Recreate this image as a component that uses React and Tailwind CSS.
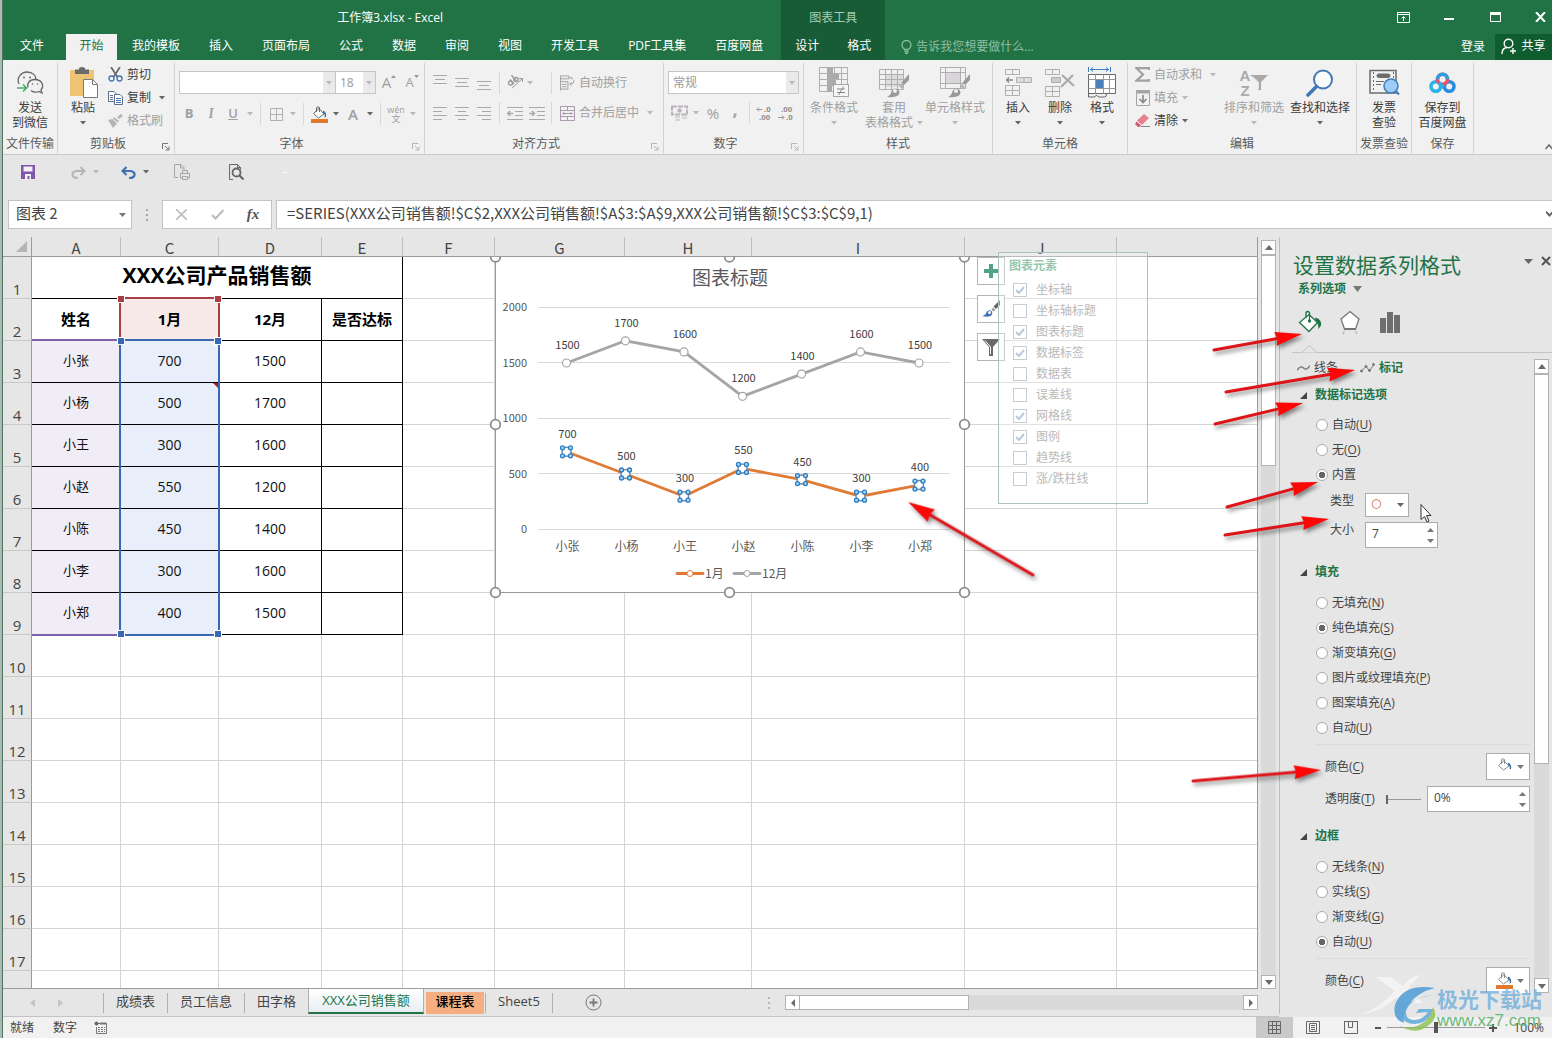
import React from "react";

const cx = (...parts) => parts.filter(Boolean).join(" ");

/* ---------- small shared pieces ---------- */

function Caret({ className = "text-[#666]" }) {
  return (
    <svg width="6" height="4" viewBox="0 0 6 4" className={cx("shrink-0", className)} aria-hidden="true">
      <path d="M0 0h6L3 3.5z" fill="currentColor" />
    </svg>
  );
}

function CaretButton({ label, dim, className = "w-3" }) {
  return (
    <button aria-label={label} className={cx("flex h-5 items-center justify-center", className)}>
      <Caret className={dim ? "text-[#b8b8b8]" : "text-[#666]"} />
    </button>
  );
}

function Sep({ className = "mx-1" }) {
  return <span className={cx("h-[22px] w-px shrink-0 bg-[#d8d8d8]", className)} />;
}

function Launcher({ dim }) {
  return (
    <svg width="8" height="8" viewBox="0 0 8 8" className={dim ? "text-[#b5b5b5]" : "text-[#777]"} aria-hidden="true">
      <path d="M.5 6V.5H6M3 3l3.5 3.5M7 3.5V7H3.5" fill="none" stroke="currentColor" />
    </svg>
  );
}

function Group({ name, width, children, launcher, dimLauncher }) {
  return (
    <section aria-label={name} className={cx("flex shrink-0 flex-col border-r border-[#d2d2d2]", width)}>
      <div className="h-[72px]">{children}</div>
      <div
        className={cx(
          "relative flex h-4 items-center justify-center pt-0.5 text-xs whitespace-nowrap text-[#5a5a5a]",
          launcher && "pr-4"
        )}
      >
        {name}
        {launcher && (
          <button aria-label={name + "设置"} className="absolute bottom-0 right-1">
            <Launcher dim={dimLauncher} />
          </button>
        )}
      </div>
    </section>
  );
}

function BigButton({ icon, lines, dim, caret, inlineCaret, width }) {
  return (
    <button className={cx("flex shrink-0 flex-col items-center pt-1", width, dim ? "text-[#a0a0a0]" : "text-[#3c3c3c]")}>
      <span className="flex h-[31px] items-center justify-center">{icon}</span>
      <span className="mt-0.5 flex flex-col items-center text-xs leading-[15px] whitespace-nowrap">
        {lines.map((l, i) => (
          <span key={l} className="flex items-center gap-1">
            {l}
            {inlineCaret && i === lines.length - 1 && <Caret className="text-[#b8b8b8]" />}
          </span>
        ))}
        {caret && (
          <span className="flex h-[15px] items-center">
            <Caret className={dim ? "text-[#b8b8b8]" : "text-[#666]"} />
          </span>
        )}
      </span>
    </button>
  );
}

function RibbonSelect({ label, value, className }) {
  return (
    <span className={cx("relative flex h-[23px]", className)}>
      <select aria-label={label} className="w-full appearance-none border border-[#c6c6c6] bg-white pl-1 text-xs text-[#9a9a9a]">
        <option>{value}</option>
      </select>
      <span className="pointer-events-none absolute inset-y-px right-px flex w-3 items-center justify-center bg-[#eaeaea]">
        <Caret className="text-[#b8b8b8]" />
      </span>
    </span>
  );
}

/* ---------- icons ---------- */

const WeChat = () => (
  <svg width="27" height="24" viewBox="0 0 27 24" fill="none" stroke="#666" strokeWidth="1.3">
    <path d="M2 13C-1 6 5 1 10 1c6 0 9 4 9 7M14 19.500c2 2 6 2 8 1l3 1.500-1-3c4-5 0-10.500-6-10.500s-8 4-7 8" />
    <circle cx="7" cy="6.500" r=".9" fill="#666" stroke="none" />
    <circle cx="13" cy="6.500" r=".9" fill="#666" stroke="none" />
    <circle cx="15.500" cy="13" r=".8" fill="#666" stroke="none" />
    <circle cx="20.500" cy="13" r=".8" fill="#666" stroke="none" />
    <path d="M0 17h9M6 13.500L9.500 17 6 20.500" stroke="#4bab6f" strokeWidth="1.600" />
  </svg>
);

const Paste = () => (
  <svg width="29" height="31" viewBox="0 0 29 31">
    <rect x="1" y="3" width="24" height="26" fill="#efc374" />
    <path d="M6 2.500h4V1q3-2 6 0v1.500h4V7H6z" fill="#6b6b6b" />
    <path d="M14.500 12.500h9l5 5v13h-14z" fill="#fff" stroke="#7a7a7a" />
    <path d="M23.500 12.500v5h5" fill="none" stroke="#7a7a7a" />
  </svg>
);

const Cut = () => (
  <svg width="15" height="15" viewBox="0 0 15 15" fill="none">
    <path d="M3 0l6.500 10M12 0L5.500 10" stroke="#666" strokeWidth="1.700" />
    <circle cx="3.500" cy="11.500" r="2.500" stroke="#3f73ae" strokeWidth="1.300" />
    <circle cx="11.500" cy="11.500" r="2.500" stroke="#3f73ae" strokeWidth="1.300" />
  </svg>
);

const Copy = () => (
  <svg width="15" height="14" viewBox="0 0 15 14" fill="#fff" stroke="#5c6f87">
    <path d="M.5.500H6l2 2v8H.5z" />
    <path d="M2 4.500h3M2 6.500h3M2 8.500h3" />
    <path d="M6.500 3.500H12l2.500 2.500v7.500h-8z" />
    <path d="M8 7.500h5M8 9.500h5M8 11.500h5" stroke="#3f73ae" />
  </svg>
);

const Painter = () => (
  <svg width="15" height="14" viewBox="0 0 15 14" fill="#b5b5b5">
    <path d="M9 3l4-3 2 2-4 3zM6 3l5 4-1.500 1.500L5 4.500zM0 6l4.500-1 4.500 4.500L5 14z" />
  </svg>
);

const BorderGrid = () => (
  <svg width="13" height="13" viewBox="0 0 13 13" fill="none" stroke="#b0b0b0">
    <path d="M.5.500h12v12H.5zM6.500 0v13M0 6.500h13" />
  </svg>
);

const Bucket = ({ bar = "#e07a2e", stroke = "#666" }) => (
  <svg width="17" height="17" viewBox="0 0 17 17" fill="none">
    <path d="M8 2.500L13 8l-5.500 4L2.500 7.500z" fill="#fff" stroke={stroke} />
    <path d="M5.500 6V1.500q1.500-1.500 3 0V6" stroke={stroke} />
    <path d="M12 4.500q4 1.500 3 6.500l-1.500.5Q14.500 8 12 7z" fill="#3f73ae" />
    {bar && <rect x="0" y="13" width="17" height="4" fill={bar} />}
  </svg>
);

const Lines = ({ rows, h = 15 }) => (
  <svg width="14" height={h} viewBox={`0 0 14 ${h}`} stroke="#a9a9a9">
    {rows.map(([y, x1, x2]) => (
      <path key={y} d={`M${x1} ${y}H${x2}`} />
    ))}
  </svg>
);

const Indent = ({ flip }) => (
  <svg width="16" height="13" viewBox="0 0 16 13" fill="none" stroke="#a9a9a9">
    <path d="M0 .5h16M8 4.500h8M8 8.500h8M0 12.500h16" />
    <path d={flip ? "M0 6.500h5M3 4l2.500 2.500L3 9" : "M1 6.500h5M3 4L.8 6.500 3 9"} strokeWidth="1.500" />
  </svg>
);

const Orient = () => (
  <svg width="17" height="15" viewBox="0 0 17 15" fill="none" stroke="#999">
    <path d="M5 13L15 4M12 3.500l3.500 0v3.500" />
    <circle cx="3.500" cy="8" r="2" strokeWidth="1.400" />
    <path d="M3 4.500L7 9" strokeWidth="1.400" />
    <circle cx="9" cy="4.500" r="2" strokeWidth="1.400" />
    <path d="M4.500 0L9 6" strokeWidth="1.400" />
  </svg>
);

const Wrap = () => (
  <svg width="16" height="16" viewBox="0 0 16 16" fill="none" stroke="#a0a0a0">
    <path d="M.5 0v16M.5.500h9v3h-9M.5 6.500h8v8h-8M2 9.500h5M2 12h5M9.500 2.500H13v2M14.500 5q1.500 4-4 4M12.500 7l-2 2 2 2" />
  </svg>
);

const Merge = () => (
  <svg width="15" height="15" viewBox="0 0 15 15" fill="none" stroke="#a99bad">
    <path d="M.5.500h14v14H.5zM.5 4.500h14M.5 10.500h14M7.500.500v4M7.500 10.500v4" />
    <path d="M2.500 7.500h10M4.500 6L3 7.500 4.500 9M10.500 6L12 7.500 10.500 9" />
  </svg>
);

const Money = () => (
  <svg width="17" height="16" viewBox="0 0 17 16" fill="none" stroke="#b9b3bb">
    <path d="M1 1.500h15v8H1z" strokeWidth="2" strokeDasharray="5 1" />
    <circle cx="8.500" cy="5.500" r="1.800" fill="#b9b3bb" />
    <path d="M4 12h5M4 15h5M11 10.500h5M11 13h5" strokeWidth="1.500" stroke="#ccc" />
  </svg>
);

const Brush = () => (
  <g>
    <path d="M30 7v6l-5 5-2.500-2.500z" fill="#999" />
    <path d="M22 17l3 3-2 2-3-3z" fill="#b5b5b5" />
    <path d="M8 30q4-2 4.500-6 3-4 6.500-1.500 3 3 0 6Q15 31 8 30z" fill="#999" />
    <circle cx="16" cy="24" r="2" fill="#f1f1f1" />
  </g>
);

const CondFormat = () => (
  <svg width="31" height="31" viewBox="0 0 31 31" fill="none" stroke="#b3acb5">
    <path d="M.5.500h28v24H.5zM.5 6.500h28M.5 12.500h28M.5 18.500h28M8.500.500v24M15.500.500v24M22.500.500v24" />
    <path d="M8 1h6v6H8zM8 7h12v5H8zM8 13h9v5H8zM8 19h5v5H8z" fill="#aaa" stroke="none" />
    <rect x="14.500" y="17.500" width="15" height="12" fill="#f6f6f6" stroke="#a5a5a5" />
    <path d="M18 22h8M18 25.500h8M24.500 19.500l-5 8.500" stroke="#888" />
  </svg>
);

const TableFormat = () => (
  <svg width="31" height="31" viewBox="0 0 31 31" fill="none" stroke="#b3acb5">
    <path d="M7 8h18v12H7z" fill="#ddd" stroke="none" />
    <path d="M.5 2.500h24v20H.5zM.5 7.500h24M.5 12.500h24M.5 17.500h24M6.500 2.500v20M12.500 2.500v20M18.500 2.500v20" />
    <g stroke="none"><Brush /></g>
  </svg>
);

const CellStyle = () => (
  <svg width="31" height="31" viewBox="0 0 31 31" fill="none" stroke="#b3acb5">
    <path d="M6 6h14v10H6z" fill="#d9d6da" stroke="none" />
    <path d="M.5.500h25v21H.5zM.5 5.500h25M.5 16.500h25M5.500.500v21M20.500.500v21" />
    <g stroke="none"><Brush /></g>
  </svg>
);

const InsertCells = () => (
  <svg width="27" height="28" viewBox="0 0 27 28" fill="none" stroke="#b0b0b0">
    <path d="M.5.500h14v5H.5zM7.500.500v5M.5 16.500h14v10H.5zM7.500 16.500v10M.5 21.500h14" />
    <path d="M11.500 8.500h15v5h-15zM19 8.500v5" fill="#ddd" />
    <path d="M1 11h7M4 8.500L1.500 11 4 13.500" stroke="#888" strokeWidth="1.300" />
  </svg>
);

const DeleteCells = () => (
  <svg width="30" height="28" viewBox="0 0 30 28" fill="none" stroke="#b0b0b0">
    <path d="M.5.500h14v5H.5zM7.500.500v5M.5 17.500h14v10H.5zM7.500 17.500v10M.5 22.500h14" />
    <path d="M6.500 8.500h9v5h-9z" fill="#ccc" />
    <path d="M17 6l12 11M28 6L16 18" stroke="#aaa" strokeWidth="2.200" />
  </svg>
);

const FormatCells = () => (
  <svg width="28" height="31" viewBox="0 0 28 31" fill="none" stroke="#666">
    <path d="M.5 0v5M22.500 0v5M2 2.500h19M5 .5L2.500 2.500 5 4.500M18 .5l2.500 2L18 4.500" stroke="#3a7dbd" />
    <path d="M.5 7.500h27v19H.5z" fill="#fff" />
    <path d="M.5 12.500h27M.5 21.500h27M7.500 7.500v19M15.500 7.500v19M21.500 7.500v19" stroke="#999" />
    <rect x="8" y="13" width="7" height="8" fill="#4a80ba" stroke="none" />
    <path d="M.5 26v4h5q2 0 3-2 1 2 3 2h5q2 0 2-3" />
  </svg>
);

const Sum = () => (
  <svg width="15" height="15" viewBox="0 0 15 15" fill="none" stroke="#a0a0a0" strokeWidth="2.200">
    <path d="M14 3V1.200H1.500L8 7.500l-6.500 6.200H14V12" />
  </svg>
);

const FillDown = () => (
  <svg width="14" height="16" viewBox="0 0 14 16" fill="none" stroke="#a5a5a5">
    <path d="M.5.500h13v15H.5z" />
    <path d="M0 2h14" strokeWidth="3" />
    <path d="M7 5v7M3.500 9L7 12.500 10.500 9" stroke="#888" strokeWidth="1.600" />
  </svg>
);

const Eraser = () => (
  <svg width="15" height="14" viewBox="0 0 15 14">
    <path d="M9 0l5 4-7 7-5-4.500z" fill="#e8818f" />
    <path d="M1.500 7.500L6 11.500 4.500 13H3L0 10z" fill="#cf5b6c" />
    <path d="M6 12.500h9" stroke="#888" />
  </svg>
);

const SortFilter = () => (
  <span className="flex items-center text-[#a9a9a9]">
    <span className="flex flex-col font-['Liberation_Sans',sans-serif] text-[15px] leading-[15px] font-bold">
      <span>A</span>
      <span>Z</span>
    </span>
    <svg width="18" height="16" viewBox="0 0 18 16" fill="#a9a9a9">
      <path d="M0 0h18l-7 7v8H8V7z" />
      <path d="M2.500 1.500L8.500 7v7" fill="none" stroke="#e6e6e6" />
    </svg>
  </span>
);

const Find = () => (
  <svg width="28" height="28" viewBox="0 0 28 28" fill="none" stroke="#4278b5">
    <circle cx="17" cy="10.500" r="9" fill="#fdfdfd" strokeWidth="2" />
    <path d="M10.500 17.500L2 26" strokeWidth="3.600" strokeLinecap="round" />
  </svg>
);

const Invoice = () => (
  <svg width="31" height="27" viewBox="0 0 31 27" fill="none" stroke="#6b6b6b">
    <path d="M1 1.500h26v22.500H1z" strokeWidth="1.500" />
    <path d="M4.500 3v20M24.500 3v9" strokeDasharray="2 2" />
    <rect x="8" y="5" width="13" height="3.500" rx="1.700" fill="#6b6b6b" />
    <path d="M7 12.500h8M7 15.500h5" />
    <circle cx="22" cy="17" r="7" fill="#9ecbf7" stroke="#3f7db8" strokeWidth="1.500" />
    <path d="M27 22l3 3.500" stroke="#3f7db8" strokeWidth="2" />
  </svg>
);

const Netdisk = () => (
  <svg width="27" height="23" viewBox="0 0 27 23" fill="none" strokeWidth="3.600">
    <circle cx="6.800" cy="15.500" r="4.800" stroke="#29b3e8" />
    <circle cx="20.200" cy="15.500" r="4.800" stroke="#2b8be2" />
    <circle cx="13.500" cy="8.200" r="5" stroke="#e9546b" />
    <path d="M8.500 8.200a5 5 0 0 1 10 0" stroke="#2d9fdc" />
    <path d="M10 12l4.500 4.500" stroke="#29b3e8" />
  </svg>
);

const DecBtn = ({ top, bottom, arrow }) => (
  <svg width="16" height="15" viewBox="0 0 16 15" fontFamily="Liberation Sans, sans-serif" fontSize="8" fill="#888" fontWeight="bold">
    <text x={arrow ? 8 : 3} y="6">{top}</text>
    <text x={arrow ? 3 : 8} y="14">{bottom}</text>
    <path d={arrow ? "M1 3.500h5M3 1.500l-2 2 2 2" : "M0 11.500h6M4 9.500l2 2-2 2"} fill="none" stroke="#999" />
  </svg>
);

/* ---------- header ---------- */

function Tab({ children }) {
  return <button className="h-full px-[14px] text-xs whitespace-nowrap text-white">{children}</button>;
}

function Header() {
  const tabs = ["我的模板", "插入", "页面布局", "公式", "数据", "审阅", "视图", "开发工具", "PDF工具集", "百度网盘"];
  return (
    <header className="flex h-[60px] shrink-0 bg-[#217346] text-xs text-white">
      <div className="flex shrink-0 flex-col">
        <h1 className="flex h-[35px] items-center justify-center">工作簿3.xlsx - Excel</h1>
        <nav className="-mt-px flex h-[26px] gap-px pb-0.5">
          <button className="mr-1 h-full w-[58px]">文件</button>
          <button className="-mb-0.5 w-[51px] bg-[#f1f1f1] pb-0.5 text-[#217346]">开始</button>
          {tabs.map((t) => (
            <Tab key={t}>{t}</Tab>
          ))}
        </nav>
      </div>
      <div className="ml-1 flex shrink-0 flex-col bg-[#185c37]">
        <div className="flex h-[35px] items-center justify-center text-[#a5cdb5]">图表工具</div>
        <div className="-mt-px flex h-[26px] pb-0.5">
          <Tab>设计</Tab>
          <Tab>格式</Tab>
        </div>
      </div>
      <div className="flex min-w-0 flex-1 flex-col">
        <div className="flex h-[34px] items-center justify-end">
          <button aria-label="功能区显示选项" className="flex w-[46px] justify-center">
            <svg width="13" height="11" viewBox="0 0 13 11" fill="none" stroke="#fff">
              <path d="M.5.500h12v10H.5zM.5 2.500h12M6.500 9V4.500M4.500 6.500l2-2 2 2" />
            </svg>
          </button>
          <button aria-label="最小化" className="flex w-[46px] justify-center">
            <svg width="10" height="8" viewBox="0 0 10 8"><path d="M0 6h10" stroke="#fff" strokeWidth="2" /></svg>
          </button>
          <button aria-label="最大化" className="flex w-[46px] justify-center">
            <svg width="11" height="10" viewBox="0 0 11 10"><path d="M.5.500h10v9H.5z" fill="none" stroke="#fff" /><path d="M0 1.500h11" stroke="#fff" strokeWidth="3" /></svg>
          </button>
          <button aria-label="关闭" className="flex w-[34px] justify-end pr-1.5">
            <svg width="11" height="10" viewBox="0 0 11 10"><path d="M1 0l9 10M10 0L1 10" stroke="#fff" strokeWidth="2" /></svg>
          </button>
        </div>
        <div className="flex h-[26px] items-center">
          <label className="ml-4 flex flex-1 items-center gap-1 text-[#8fbfa3]">
            <svg width="11" height="14" viewBox="0 0 11 14" fill="none" stroke="#8fbfa3" strokeWidth="1.300">
              <path d="M3.500 9.500Q1 7 1 5a4.500 4.500 0 0 1 9 0q0 2-2.500 4.500zM3.500 11.500h4M4 13.300h3" />
            </svg>
            <input aria-label="操作说明搜索" placeholder="告诉我您想要做什么..." className="w-40 bg-transparent text-xs text-white placeholder:text-[#8fbfa3]" />
          </label>
          <button className="px-2.5">登录</button>
          <button className="flex h-[26px] w-[57px] items-center justify-center gap-1 bg-[#0f5c2f] pb-0.5 whitespace-nowrap">
            <svg width="16" height="17" viewBox="0 0 16 17" fill="none" stroke="#fff" strokeWidth="1.400">
              <circle cx="7.500" cy="5.500" r="4.300" />
              <path d="M1 16q0-6 5-6.500M12 10v6M9 13h6" />
            </svg>
            共享
          </button>
        </div>
      </div>
    </header>
  );
}

/* ---------- ribbon ---------- */

function IconCell({ label, children, width = "w-[22px]" }) {
  return (
    <button aria-label={label} className={cx("flex h-5 shrink-0 items-center justify-center text-[#a0a0a0]", width)}>
      {children}
    </button>
  );
}

function SmallButton({ icon, children, dim, caret, gap = "ml-2" }) {
  return (
    <button className={cx("flex h-[23px] items-center whitespace-nowrap text-xs", dim ? "text-[#a0a0a0]" : "text-[#3c3c3c]")}>
      <span className="mr-1 flex w-[15px] justify-center">{icon}</span>
      {children}
      {caret && <Caret className={cx(gap, dim ? "text-[#b8b8b8]" : "text-[#666]")} />}
    </button>
  );
}

function Ribbon() {
  return (
    <div className="flex h-[95px] shrink-0 border-b border-[#c9c9c9] bg-[#f1f1f1] pt-[3px]">
      <Group name="文件传输" width="w-[55px]">
        <BigButton width="w-full" icon={<WeChat />} lines={["发送", "到微信"]} />
      </Group>

      <Group name="剪贴板" width="w-[117px]" launcher>
        <div className="flex">
          <BigButton width="w-[50px]" icon={<Paste />} lines={["粘贴"]} caret />
          <div>
            <SmallButton icon={<Cut />}>剪切</SmallButton>
            <SmallButton icon={<Copy />} caret>复制</SmallButton>
            <SmallButton icon={<Painter />} dim>格式刷</SmallButton>
          </div>
        </div>
      </Group>

      <Group name="字体" width="w-[250px]" launcher dimLauncher>
        <div className="flex flex-col gap-[9px] pt-2">
          <div className="flex items-center pl-1">
            <RibbonSelect label="字体" value="" className="w-[157px]" />
            <RibbonSelect label="字号" value="18" className="-ml-px w-[41px]" />
            <IconCell label="增大字号" width="w-[26px]">
              <span className="text-[15px]">A</span>
              <svg width="5" height="3" className="mb-3"><path d="M0 3L2.500 0 5 3z" fill="#999" /></svg>
            </IconCell>
            <IconCell label="减小字号" width="w-[20px]">
              <span className="text-[13px]">A</span>
              <svg width="5" height="3" className="mb-3"><path d="M0 0h5L2.500 3z" fill="#999" /></svg>
            </IconCell>
          </div>
          <div className="flex items-center pl-[3px] text-[13px]">
            <IconCell label="加粗"><b>B</b></IconCell>
            <IconCell label="倾斜"><i className="font-serif font-bold">I</i></IconCell>
            <IconCell label="下划线"><u className="font-semibold">U</u></IconCell>
            <CaretButton label="下划线选项" dim />
            <Sep />
            <IconCell label="边框"><BorderGrid /></IconCell>
            <CaretButton label="边框选项" dim />
            <Sep />
            <IconCell label="填充颜色"><Bucket /></IconCell>
            <CaretButton label="填充颜色选项" />
            <IconCell label="字体颜色"><span className="text-[15px] font-semibold">A</span></IconCell>
            <CaretButton label="字体颜色选项" />
            <Sep />
            <IconCell label="拼音">
              <span className="flex flex-col items-center text-[9px] leading-[9px]">
                <span>wén</span>
                <span>文</span>
              </span>
            </IconCell>
            <CaretButton label="拼音选项" dim />
          </div>
        </div>
      </Group>

      <Group name="对齐方式" width="w-[239px]" launcher dimLauncher>
        <div className="flex flex-col gap-[9px] pt-2 pl-1">
          <div className="flex h-[23px] items-center">
            <IconCell label="顶端对齐"><Lines rows={[[0.5, 0, 14], [4.5, 2, 12], [8.5, 0, 14]]} /></IconCell>
            <IconCell label="垂直居中"><Lines rows={[[3.5, 0, 14], [7.5, 2, 12], [11.5, 0, 14]]} /></IconCell>
            <IconCell label="底端对齐"><Lines rows={[[6.5, 0, 14], [10.5, 2, 12], [14.5, 0, 14]]} /></IconCell>
            <Sep />
            <IconCell label="方向"><Orient /></IconCell>
            <CaretButton label="方向选项" dim className="w-2" />
            <Sep className="ml-[17px] mr-[8px]" />
            <SmallButton icon={<Wrap />} dim>自动换行</SmallButton>
          </div>
          <div className="flex h-5 items-center">
            <IconCell label="左对齐"><Lines h={13} rows={[[0.5, 0, 14], [4.5, 0, 9], [8.5, 0, 14], [12.5, 0, 9]]} /></IconCell>
            <IconCell label="居中"><Lines h={13} rows={[[0.5, 0, 14], [4.5, 3, 11], [8.5, 0, 14], [12.5, 3, 11]]} /></IconCell>
            <IconCell label="右对齐"><Lines h={13} rows={[[0.5, 0, 14], [4.5, 5, 14], [8.5, 0, 14], [12.5, 5, 14]]} /></IconCell>
            <Sep />
            <IconCell label="减少缩进量"><Indent /></IconCell>
            <IconCell label="增加缩进量"><Indent flip /></IconCell>
            <Sep className="ml-[3px] mr-[8px]" />
            <SmallButton icon={<Merge />} dim caret>合并后居中</SmallButton>
          </div>
        </div>
      </Group>

      <Group name="数字" width="w-[140px]" launcher dimLauncher>
        <div className="flex flex-col gap-[9px] px-1 pt-2">
          <RibbonSelect label="数字格式" value="常规" className="w-full" />
          <div className="flex h-5 items-center">
            <IconCell label="会计数字格式"><Money /></IconCell>
            <CaretButton label="会计格式选项" dim />
            <IconCell label="百分比"><span className="text-[15px]">%</span></IconCell>
            <IconCell label="千位分隔"><b className="pb-2 text-lg">,</b></IconCell>
            <Sep className="mx-[3px]" />
            <IconCell label="增加小数位数"><DecBtn arrow top=".0" bottom=".00" /></IconCell>
            <IconCell label="减少小数位数"><DecBtn top=".00" bottom=".0" /></IconCell>
          </div>
        </div>
      </Group>

      <Group name="样式" width="w-[189px]">
        <div className="flex">
          <BigButton width="w-[60px]" dim icon={<CondFormat />} lines={["条件格式"]} caret />
          <BigButton width="w-[60px]" dim icon={<TableFormat />} lines={["套用", "表格格式"]} inlineCaret />
          <BigButton width="w-[62px]" dim icon={<CellStyle />} lines={["单元格样式"]} caret />
        </div>
      </Group>

      <Group name="单元格" width="w-[135px]">
        <div className="flex pl-1">
          <BigButton width="w-[42px]" icon={<InsertCells />} lines={["插入"]} caret />
          <BigButton width="w-[42px]" icon={<DeleteCells />} lines={["删除"]} caret />
          <BigButton width="w-[42px]" icon={<FormatCells />} lines={["格式"]} caret />
        </div>
      </Group>

      <Group name="编辑" width="w-[229px]">
        <div className="flex pl-[7px]">
          <div className="w-[86px]">
            <SmallButton icon={<Sum />} dim caret>自动求和</SmallButton>
            <SmallButton icon={<FillDown />} dim caret gap="ml-1">填充</SmallButton>
            <SmallButton icon={<Eraser />} caret gap="ml-1">清除</SmallButton>
          </div>
          <BigButton width="w-[66px]" dim icon={<SortFilter />} lines={["排序和筛选"]} caret />
          <BigButton width="w-[66px]" icon={<Find />} lines={["查找和选择"]} caret />
        </div>
      </Group>

      <Group name="发票查验" width="w-[55px]">
        <BigButton width="w-full" icon={<Invoice />} lines={["发票", "查验"]} />
      </Group>

      <Group name="保存" width="w-[62px]">
        <BigButton width="w-full" icon={<Netdisk />} lines={["保存到", "百度网盘"]} />
      </Group>

      <div className="flex flex-1 items-end justify-end pb-1">
        <button aria-label="折叠功能区">
          <svg width="7" height="6" viewBox="0 0 7 6"><path d="M.5 5L4 1l3.500 4" fill="none" stroke="#666" strokeWidth="1.500" /></svg>
        </button>
      </div>
    </div>
  );
}

/* ---------- quick access + formula bar ---------- */

function QuickAccess() {
  return (
    <div className="flex h-[45px] shrink-0 items-start pt-[7px] pl-[14px]">
      <IconCell label="保存">
        <svg width="14" height="14" viewBox="0 0 14 14">
          <path d="M0 0h14v14H0z" fill="#7e57a8" />
          <path d="M2.500 1.500h9v5h-9zM4 9h6v5H8.500v-3h-2v3H4z" fill="#f3eef8" />
        </svg>
      </IconCell>
      <IconCell label="恢复" width="ml-[28px] w-[22px]">
        <svg width="15" height="13" viewBox="0 0 15 13" fill="none" stroke="#b5b5b5" strokeWidth="2">
          <path d="M13 5H5Q1 6 1.500 9T7 12M9.500 1l4 4-4 4" />
        </svg>
      </IconCell>
      <CaretButton label="恢复选项" dim className="ml-px w-3" />
      <IconCell label="撤消" width="ml-[15px] w-[22px]">
        <svg width="15" height="13" viewBox="0 0 15 13" fill="none" stroke="#3f73ae" strokeWidth="2.200">
          <path d="M2 5h8q4 1 3.500 4T8 12M5.500 1l-4 4 4 4" />
        </svg>
      </IconCell>
      <CaretButton label="撤消选项" className="ml-px w-3" />
      <IconCell label="快速打印" width="ml-[19px] w-[22px]">
        <svg width="16" height="16" viewBox="0 0 16 16" fill="none" stroke="#a5a5a5">
          <path d="M4 13.500H.5V.500H7l3 3v3M6.500 .5v3.500h3M6.500 12V9.500h9V14h-2M8.500 9V6.500h5V9M8.500 12.500h5v3h-5zM6.500 12v2h2" />
        </svg>
      </IconCell>
      <IconCell label="打印预览" width="ml-[32px] w-[22px]">
        <svg width="15" height="16" viewBox="0 0 15 16" fill="none" stroke="#666">
          <path d="M4 15.500H.5V.500h8l3 3v2M8.500 .5v3h3" />
          <circle cx="7.500" cy="8.500" r="4" strokeWidth="1.800" />
          <path d="M10.500 11.500l4 4" strokeWidth="2.200" />
        </svg>
      </IconCell>
      <button aria-label="自定义快速访问工具栏" className="ml-9 flex h-5 w-2 items-center">
        <span className="h-px w-1 bg-white" />
      </button>
    </div>
  );
}

function FormulaBar() {
  return (
    <div className="flex shrink-0 pb-2 pl-[5px] font-['Noto_Sans_CJK_SC',sans-serif] text-[15px] text-[#444]">
      <span className="relative flex h-[29px] w-[124px]">
        <select aria-label="名称框" className="w-full appearance-none border border-[#c3c3c3] bg-white pb-0.5 pl-[7px] text-[15px]">
          <option>图表 2</option>
        </select>
        <span className="pointer-events-none absolute inset-y-0 right-1.5 flex items-center">
          <svg width="7" height="4" viewBox="0 0 7 4"><path d="M0 0h7L3.500 4z" fill="#777" /></svg>
        </span>
      </span>
      <span className="flex w-[30px] flex-col items-center justify-center gap-[3px]">
        <i className="size-0.5 bg-[#a8a8a8]" />
        <i className="size-0.5 bg-[#a8a8a8]" />
        <i className="size-0.5 bg-[#a8a8a8]" />
      </span>
      <div className="flex h-[29px] w-[110px] items-center border border-[#c3c3c3] bg-white">
        <button aria-label="取消" className="flex flex-1 justify-center">
          <svg width="11" height="11" viewBox="0 0 11 11"><path d="M0 0l11 11M11 0L0 11" stroke="#bdbdbd" strokeWidth="1.600" /></svg>
        </button>
        <button aria-label="输入" className="flex flex-1 justify-center">
          <svg width="13" height="11" viewBox="0 0 13 11"><path d="M1 6l3.500 3.500L12.500 1" fill="none" stroke="#bdbdbd" strokeWidth="2.200" /></svg>
        </button>
        <button className="flex-1 font-['Liberation_Serif',serif] text-[15px] font-bold text-[#555] italic">fx</button>
      </div>
      <div className="relative ml-1 flex h-[29px] flex-1">
        <input
          aria-label="编辑栏"
          defaultValue="=SERIES(XXX公司销售额!$C$2,XXX公司销售额!$A$3:$A$9,XXX公司销售额!$C$3:$C$9,1)"
          className="w-full border border-r-0 border-[#c3c3c3] bg-white pb-0.5 pl-2.5"
        />
        <svg width="6" height="6" viewBox="0 0 6 6" className="absolute top-[11px] right-0"><path d="M0 .8L3.500 4.500 7 .8" fill="none" stroke="#666" strokeWidth="2" /></svg>
      </div>
    </div>
  );
}

/* ---------- worksheet ---------- */

const people = [
  ["小张", 700, 1500],
  ["小杨", 500, 1700],
  ["小王", 300, 1600],
  ["小赵", 550, 1200],
  ["小陈", 450, 1400],
  ["小李", 300, 1600],
  ["小郑", 400, 1500],
];

const black = "border-r border-b border-black";

function RowHead({ n }) {
  return (
    <th scope="row" className="border-r border-b border-r-[#9b9b9b] border-b-[#c9c9c9] bg-[#e6e6e6] p-0 pb-px align-bottom text-[15px] leading-4 font-normal text-[#444]">
      {n}
    </th>
  );
}

function Blanks({ from }) {
  const count = 10 - from;
  return Array.from({ length: count }, (_, i) => (
    <td key={i} className={cx("border-b border-[#d4d4d4]", i < count - 1 && "border-r")} />
  ));
}

function SheetTable() {
  const cols = ["A", "C", "D", "E", "F", "G", "H", "I", "J", ""];
  return (
    <table className="w-full table-fixed border-separate border-spacing-0 bg-white text-center text-sm text-[#111]">
      <colgroup>
        <col className="w-[29px]" />
        <col className="w-[89px]" />
        <col className="w-[98px]" />
        <col className="w-[103px]" />
        <col className="w-[81px]" />
        <col className="w-[92px]" />
        <col className="w-[130px]" />
        <col className="w-[127px]" />
        <col className="w-[213px]" />
        <col className="w-[152px]" />
        <col />
      </colgroup>
      <thead>
        <tr className="h-5 bg-[#e6e6e6] font-['Noto_Sans_CJK_SC',sans-serif] text-[15px] leading-4 text-[#444]">
          <th className="border-r border-b border-[#9b9b9b] p-0 pr-1">
            <svg width="11" height="11" viewBox="0 0 11 11" className="ml-auto"><path d="M11 0v11H0z" fill="#b5b5b5" /></svg>
          </th>
          {cols.map((c, i) => (
            <th key={i} scope="col" className={cx("border-b border-b-[#9b9b9b] p-0 pt-[3px] font-normal", i < 9 && "border-r border-r-[#bdbdbd]")}>
              {c}
            </th>
          ))}
        </tr>
      </thead>
      <tbody>
        <tr className="h-[42px]">
          <RowHead n={1} />
          <td colSpan={4} className={cx(black, "p-0 pb-1.5 text-[21px] leading-6 font-bold text-black")}>XXX公司产品销售额</td>
          <Blanks from={4} />
        </tr>
        <tr className="h-[42px] text-[15px] font-bold text-black">
          <RowHead n={2} />
          <td className={cx(black, "p-0")}>姓名</td>
          <td className={cx(black, "bg-[#f8e9e9] p-0")}>1月</td>
          <td className={cx(black, "p-0")}>12月</td>
          <td className={cx(black, "p-0")}>是否达标</td>
          <Blanks from={4} />
        </tr>
        {people.map(([name, jan, dec], i) => (
          <tr key={name} className="h-[42px]">
            <RowHead n={i + 3} />
            <td className={cx(black, "bg-[#f1edf7] p-0 pb-0.5 text-[13px]")}>{name}</td>
            <td className={cx(black, "bg-[#e8effa] p-0 pb-0.5")}>{jan}</td>
            <td className={cx(black, "p-0 pb-0.5")}>{dec}</td>
            <td className={cx(black, "p-0")} />
            <Blanks from={4} />
          </tr>
        ))}
        {Array.from({ length: 9 }, (_, i) => (
          <tr key={i} className="h-[42px]">
            <RowHead n={i < 8 ? i + 10 : ""} />
            <Blanks from={0} />
          </tr>
        ))}
      </tbody>
    </table>
  );
}

function Chart() {
  const xs = [566.5, 625.5, 684, 742.5, 801.5, 860.5, 919];
  const y = (v) => 529.5 - v * 0.111;
  const line = (k) => people.map((p, i) => `${xs[i]},${y(p[k])}`).join(" ");
  const handles = [[495.5, 257], [729.5, 257], [964.5, 257], [495.5, 424.5], [964.5, 424.5], [495.5, 592.5], [729.5, 592.5], [964.5, 592.5]];
  return (
    <svg
      role="img"
      aria-label="图表标题"
      width="486"
      height="350"
      viewBox="487 250 486 350"
      className="absolute -top-[7px] left-[455px]"
      fontFamily="'Noto Sans CJK SC', sans-serif"
      fontSize="11"
      textAnchor="middle"
    >
      <rect x="495.500" y="250" width="469" height="342.500" fill="#fff" stroke="#9a9a9a" />
      <text x="730" y="285" fontSize="19" fill="#595959">图表标题</text>
      {[0, 500, 1000, 1500, 2000].map((v) => (
        <g key={v}>
          <path d={`M538 ${Math.round(y(v)) - 0.5}H950`} stroke="#d9d9d9" />
          <text x="527" y={y(v) + 3.5} textAnchor="end" fill="#595959">{v}</text>
        </g>
      ))}
      <polyline points={line(2)} fill="none" stroke="#a5a5a5" strokeWidth="2.800" />
      <polyline points={line(1)} fill="none" stroke="#e07b36" strokeWidth="2.800" />
      {people.map((p, i) => (
        <g key={p[0]}>
          <circle cx={xs[i]} cy={y(p[2])} r="4" fill="#fff" stroke="#a5a5a5" strokeWidth="1.200" />
          <circle cx={xs[i]} cy={y(p[1])} r="4.500" fill="#fff" stroke="#6f8ba5" strokeWidth="1.500" />
          {[[-4, -4], [4, -4], [-4, 4], [4, 4]].map(([dx, dy]) => (
            <circle key={dx + "," + dy} cx={xs[i] + dx} cy={y(p[1]) + dy} r="2" fill="#a9d8f2" stroke="#2c7cc4" strokeWidth="1.300" />
          ))}
          <text x={xs[i] + 1} y={y(p[2]) - 14} fill="#404040">{p[2]}</text>
          <text x={xs[i] + 1} y={y(p[1]) - 14} fill="#404040">{p[1]}</text>
          <text x={xs[i] + 1} y="551" fontSize="12" fill="#595959">{p[0]}</text>
        </g>
      ))}
      <path d="M677 573.500h26" stroke="#e07b36" strokeWidth="2.800" strokeLinecap="round" />
      <circle cx="690" cy="573.500" r="3" fill="#fff" stroke="#e07b36" />
      <text x="705" y="577.500" fontSize="12" textAnchor="start" fill="#595959">1月</text>
      <path d="M734 573.500h26" stroke="#a5a5a5" strokeWidth="2.800" strokeLinecap="round" />
      <circle cx="747" cy="573.500" r="3" fill="#fff" stroke="#a5a5a5" />
      <text x="762" y="577.500" fontSize="12" textAnchor="start" fill="#595959">12月</text>
      {handles.map(([hx, hy]) => (
        <circle key={hx + "-" + hy} cx={hx} cy={hy} r="4.800" fill="#fff" stroke="#8d8d8d" strokeWidth="1.800" />
      ))}
    </svg>
  );
}

function Handle({ className }) {
  return <i className={cx("absolute size-1.5 ring-1 ring-white", className)} />;
}

function RangeMarkers() {
  return (
    <>
      <div className="absolute top-[82px] -left-1 h-[297px] w-[93px] border-2 border-r-0 border-[#7d60a8]" />
      <div className="absolute top-[40px] left-[87px] h-11 w-[101px] border-2 border-[#a93f45]">
        <Handle className="-top-[3px] -left-[3px] bg-[#a93f45]" />
        <Handle className="-top-[3px] -right-[3px] bg-[#a93f45]" />
      </div>
      <svg width="5" height="5" className="absolute top-[126px] left-[181px]"><path d="M0 0h5v5z" fill="#a8202c" /></svg>
      <div className="absolute top-[82px] left-[87px] h-[297px] w-[101px] border-2 border-[#3a67b1]">
        <Handle className="-top-[3px] -left-[3px] bg-[#3a67b1]" />
        <Handle className="-top-[3px] -right-[3px] bg-[#3a67b1]" />
        <Handle className="-bottom-[3px] -left-[3px] bg-[#3a67b1]" />
        <Handle className="-right-[3px] -bottom-[3px] bg-[#3a67b1]" />
      </div>
    </>
  );
}

function ChartButtons() {
  const base = "flex size-[28px] items-center justify-center border border-[#b5b5b5] bg-white";
  return (
    <div className="absolute top-0 left-[945px] flex flex-col gap-2.5">
      <button aria-label="图表元素" className={base}>
        <svg width="14" height="14" viewBox="0 0 14 14"><path d="M5 0h4v5h5v4H9v5H5V9H0V5h5z" fill="#4fa583" /></svg>
      </button>
      <button aria-label="图表样式" className={base}>
        <svg width="18" height="18" viewBox="0 0 18 18">
          <path d="M18 0v5l-4 4-2.500-2.500z" fill="#666" />
          <path d="M11 7.500L13.500 10l-2 1.500-2-2z" fill="#999" />
          <path d="M0 16q4-1 4.500-4 2-3 5-1 2 3-1 5-3 1.500-8.500 0z" fill="#3f73ae" />
          <circle cx="7.500" cy="12.500" r="1.500" fill="#fff" />
        </svg>
      </button>
      <button aria-label="图表筛选器" className={base}>
        <svg width="18" height="17" viewBox="0 0 18 17">
          <path d="M0 0h18l-7 8v9H7V8z" fill="#6a6a6a" />
          <path d="M3 1.500L8.500 8v7" fill="none" stroke="#fff" />
        </svg>
      </button>
    </div>
  );
}

function ElementsPopup() {
  const items = [
    ["坐标轴", true],
    ["坐标轴标题", false],
    ["图表标题", true],
    ["数据标签", true],
    ["数据表", false],
    ["误差线", false],
    ["网格线", true],
    ["图例", true],
    ["趋势线", false],
    ["涨/跌柱线", false],
  ];
  return (
    <div className="absolute top-[15px] left-[995px] h-[252px] w-[150px] border border-[#a9c4be] bg-white/30 text-xs text-[#b9b9b9]">
      <h2 className="pl-2.5 leading-[26px] font-bold text-[#97c7ad]">图表元素</h2>
      <ul>
        {items.map(([name, on]) => (
          <li key={name}>
            <label className="flex h-[21px] items-center gap-[9px] pl-[14px]">
              <span className="relative flex">
                <input type="checkbox" defaultChecked={on} className="peer size-[14px] appearance-none border border-[#c5ced4]" />
                <svg width="10" height="8" viewBox="0 0 10 8" className="absolute top-[3px] left-0.5 hidden peer-checked:block">
                  <path d="M1 4l3 3 5-6" fill="none" stroke="#b7c9dd" strokeWidth="2" />
                </svg>
              </span>
              {name}
            </label>
          </li>
        ))}
      </ul>
    </div>
  );
}

function ArrowBtn({ dir, className = "size-[15px]" }) {
  const d = { up: "M0 5h8L4 0z", down: "M0 1h8L4 6z", left: "M5 0v8L1 4z", right: "M1 0v8l4-4z" }[dir];
  const names = { up: "向上", down: "向下", left: "向左", right: "向右" };
  return (
    <button aria-label={names[dir] + "滚动"} className={cx("flex shrink-0 items-center justify-center border border-[#b3b3b3] bg-white", className)}>
      <svg width={dir === "up" || dir === "down" ? 8 : 6} height={dir === "up" || dir === "down" ? 6 : 8}>
        <path d={d} fill="#6a6a6a" />
      </svg>
    </button>
  );
}

function SheetTabs() {
  const sep = "h-5 w-px shrink-0 bg-[#b0b0b0]";
  const tab = "h-full shrink-0 px-3 pb-0.5 whitespace-nowrap";
  return (
    <div className="flex h-[28px] shrink-0 items-center border-b border-[#c3c3c3] pr-[21px] text-[13px] text-[#444]">
      <div className="flex w-[100px] gap-[21px] pl-[26px]">
        <svg width="7" height="8"><path d="M6 0v8L1 4z" fill="#c3c3c3" /></svg>
        <svg width="7" height="8"><path d="M1 0v8l5-4z" fill="#c3c3c3" /></svg>
      </div>
      <span className={sep} />
      <button className={tab}>成绩表</button>
      <span className={sep} />
      <button className={tab}>员工信息</button>
      <span className={sep} />
      <button className={tab}>田字格</button>
      <button className="h-[25px] w-[116px] shrink-0 self-start border-r border-b-2 border-l border-r-[#b0b0b0] border-b-[#217346] border-l-[#b0b0b0] bg-gradient-to-b from-white to-[#e7eef3] text-[#217346]">
        XXX公司销售额
      </button>
      <button className="mr-px ml-0.5 h-[22px] w-[58px] shrink-0 bg-[#f4ae81] pb-0.5 font-medium text-black">课程表</button>
      <span className={sep} />
      <button className={tab}>Sheet5</button>
      <span className={sep} />
      <button aria-label="新工作表" className="ml-8">
        <svg width="17" height="17" viewBox="0 0 17 17" fill="none" stroke="#777">
          <circle cx="8.500" cy="8.500" r="7.500" />
          <path d="M8.500 4.500v8M4.500 8.500h8" strokeWidth="1.800" />
        </svg>
      </button>
      <div className="min-w-0 flex-1" />
      <span className="mr-[15px] flex flex-col gap-[3px]">
        <i className="size-0.5 bg-[#b5b5b5]" />
        <i className="size-0.5 bg-[#b5b5b5]" />
        <i className="size-0.5 bg-[#b5b5b5]" />
      </span>
      <div className="flex w-[473px] bg-[#dadada]">
        <ArrowBtn dir="left" />
        <div className="-ml-px h-[15px] w-[170px] border border-[#b3b3b3] bg-white" />
        <span className="flex-1" />
        <ArrowBtn dir="right" />
      </div>
    </div>
  );
}

function Worksheet() {
  return (
    <main className="flex min-w-0 flex-1 flex-col">
      <div className="flex min-h-0 flex-1">
        <div className="relative min-w-0 flex-1">
          <div className="h-full overflow-hidden border-r border-b border-[#9b9b9b]">
            <SheetTable />
          </div>
          <div className="absolute top-5 right-0 bottom-0 left-[29px] overflow-hidden">
            <RangeMarkers />
            <Chart />
            <ChartButtons />
          </div>
          <ElementsPopup />
        </div>
        <div className="ml-[3px] flex w-[18px] flex-col pt-[3px]">
          <div className="flex w-[15px] flex-1 flex-col bg-[#dadada]">
            <ArrowBtn dir="up" />
            <div className="h-[211px] border border-[#b3b3b3] bg-white" />
            <span className="flex-1" />
            <ArrowBtn dir="down" className="h-[14px] w-[15px]" />
          </div>
        </div>
      </div>
      <SheetTabs />
    </main>
  );
}

/* ---------- format pane ---------- */

function Key({ k }) {
  return k ? (
    <>
      (<u className="underline-offset-2">{k}</u>)
    </>
  ) : null;
}

function Radio({ name, text, k, on }) {
  return (
    <label className="flex h-[25px] items-center gap-1 pl-9">
      <input
        type="radio"
        name={name}
        defaultChecked={on}
        className="size-3 appearance-none rounded-full border border-[#ababab] bg-white checked:bg-[radial-gradient(circle,#666_0_3px,#fff_3.5px)]"
      />
      <span>
        {text}
        <Key k={k} />
      </span>
    </label>
  );
}

function Heading({ children, className }) {
  return (
    <h3 className={cx("flex h-6 items-center gap-[7px] pl-5 font-bold text-[#217346]", className)}>
      <svg width="8" height="7" className="shrink-0"><path d="M7 0v7H0z" fill="#444" /></svg>
      {children}
    </h3>
  );
}

function Spinner({ label, value, className }) {
  return (
    <span className={cx("relative flex h-[26px]", className)}>
      <input aria-label={label} defaultValue={value} className="w-full border border-[#ababab] bg-white px-1.5 pb-0.5 text-xs text-[#444]" />
      <span className="absolute inset-y-0 right-1 flex flex-col items-center justify-center gap-[7px]">
        <svg width="7" height="4"><path d="M0 4h7L3.500 0z" fill="#777" /></svg>
        <svg width="7" height="4"><path d="M0 0h7L3.500 4z" fill="#777" /></svg>
      </span>
    </span>
  );
}

function ColorRow({ bar, className }) {
  return (
    <div className={cx("flex items-center justify-between pl-[45px]", className)}>
      <span>
        颜色
        <Key k="C" />
      </span>
      <button aria-label="颜色" className="flex h-[27px] w-[44px] items-center justify-center gap-1 border border-[#ababab] bg-white pl-1">
        <Bucket bar={bar} stroke="#8a8a8a" />
        <svg width="7" height="4"><path d="M0 0h7L3.500 4z" fill="#777" /></svg>
      </button>
    </div>
  );
}

function Pane() {
  return (
    <aside className="mb-[3px] flex w-[273px] shrink-0 flex-col border-l border-[#bdbdbd] text-xs text-[#444]">
      <div className="flex items-center pt-3 pl-[13px]">
        <h2 className="flex-1 text-[21px] leading-8 whitespace-nowrap text-[#217346]">设置数据系列格式</h2>
        <button aria-label="任务窗格选项" className="mr-2 pb-2">
          <svg width="9" height="5"><path d="M0 0h9L4.500 5z" fill="#666" /></svg>
        </button>
        <button aria-label="关闭窗格" className="mr-px pb-2">
          <svg width="10" height="10"><path d="M1 1l8 8M9 1L1 9" stroke="#555" strokeWidth="2" /></svg>
        </button>
      </div>
      <button className="flex h-4 items-center gap-[7px] self-start pl-[18px] font-bold text-[#217346]">
        系列选项
        <svg width="9" height="6"><path d="M0 0h9L4.500 6z" fill="#777" /></svg>
      </button>
      <div className="flex h-[50px] items-center gap-4 pl-[18px]">
        <button aria-label="填充与线条" className="w-6">
          <svg width="24" height="24" viewBox="0 0 24 24" fill="none" stroke="#217346" strokeWidth="1.300">
            <path d="M11 4.500l8.500 8L11 21.500l-9.500-9z" fill="#fff" />
            <path d="M8 8V2.500q1.500-2 3.500 0V11" />
            <circle cx="11.500" cy="11" r="1" fill="#217346" />
            <path d="M17 7.500q7 1.500 6 8l-2.500 3.500q0-6-3-8z" fill="#217346" stroke="none" />
          </svg>
        </button>
        <button aria-label="效果" className="w-6">
          <svg width="24" height="26" viewBox="0 0 24 26" fill="none" stroke="#777" strokeWidth="1.300">
            <path d="M12 2.500l9 7.500-3.500 10h-11L3 10z" fill="#fff" />
            <path d="M6.500 20h11" strokeWidth="2" />
            <path d="M6.500 21.500L5 25M17.500 21.500L19 25" stroke="#bbb" />
          </svg>
        </button>
        <button aria-label="系列选项" className="w-6">
          <svg width="24" height="22" viewBox="0 0 24 22" fill="#6e6e6e">
            <path d="M2 7h6v15H2zM9 1h6v21H9zM16 4h6v18h-6z" />
          </svg>
        </button>
      </div>
      <div className="ml-3 h-1.5 border-b border-[#c3c3c3]">
        <svg width="16" height="8" viewBox="0 0 16 8" className="-mt-0.5 ml-2.5"><path d="M0 7.500L7.500.500 15 7.500" fill="#e6e6e6" stroke="#c3c3c3" /></svg>
      </div>
      <div className="flex h-[640px] min-h-0 overflow-hidden">
        <div className="min-w-0 flex-1">
          <div className="flex h-[30px] items-center pl-[17px]">
            <button className="flex items-center gap-1">
              <svg width="13" height="8" fill="none" stroke="#777" strokeWidth="1.300"><path d="M0 6.500Q3.500 1 6.500 4T13 1.500" /></svg>
              线条
            </button>
            <button className="ml-[22px] flex items-center gap-1 font-bold text-[#217346]">
              <svg width="15" height="10" fill="#777" stroke="#777">
                <path d="M1.500 8L6 3.500l3.500 4L14 1.500" fill="none" />
                <circle cx="1.500" cy="8" r="1" /><circle cx="6" cy="3.500" r="1" /><circle cx="9.500" cy="7.500" r="1" /><circle cx="13.500" cy="1.500" r="1" />
              </svg>
              标记
            </button>
          </div>
          <Heading>数据标记选项</Heading>
          <div className="pt-[5px]">
            <Radio name="marker" text="自动" k="U" />
            <Radio name="marker" text="无" k="O" />
            <Radio name="marker" text="内置" on />
          </div>
          <div className="mt-1.5 flex pl-[50px]">
            <span className="w-[35px] leading-4">类型</span>
            <span className="relative flex h-6 w-[44px]">
              <select aria-label="类型" className="w-full appearance-none border border-[#ababab] bg-white pb-1 pl-[5px] font-['DejaVu_Sans',sans-serif] text-xs font-bold text-[#c9601a]">
                <option>○</option>
              </select>
              <svg width="7" height="4" className="pointer-events-none absolute top-2.5 right-[5px]"><path d="M0 0h7L3.500 4z" fill="#666" /></svg>
            </span>
          </div>
          <div className="mt-[5px] flex pl-[50px]">
            <span className="w-[35px] leading-4">大小</span>
            <Spinner label="大小" value="7" className="w-[73px]" />
          </div>
          <Heading className="mt-3">填充</Heading>
          <div className="pt-1.5">
            <Radio name="fill" text="无填充" k="N" />
            <Radio name="fill" text="纯色填充" k="S" on />
            <Radio name="fill" text="渐变填充" k="G" />
            <Radio name="fill" text="图片或纹理填充" k="P" />
            <Radio name="fill" text="图案填充" k="A" />
            <Radio name="fill" text="自动" k="U" />
          </div>
          <div className="mt-1 ml-9 border-t border-[#dadada]" />
          <ColorRow className="mt-2" bar={null} />
          <div className="mt-1.5 flex items-center pl-[45px]">
            <label htmlFor="alpha" className="w-[61px]">
              透明度
              <Key k="T" />
            </label>
            <input
              id="alpha"
              type="range"
              defaultValue="0"
              className="h-3 w-[35px] appearance-none bg-[linear-gradient(#999,#999)] bg-[length:100%_1px] bg-center bg-no-repeat [&::-webkit-slider-thumb]:h-[9px] [&::-webkit-slider-thumb]:w-0.5 [&::-webkit-slider-thumb]:appearance-none [&::-webkit-slider-thumb]:bg-[#666]"
            />
            <span className="flex-1" />
            <Spinner label="透明度" value="0%" className="w-[103px]" />
          </div>
          <Heading className="mt-3">边框</Heading>
          <div className="pt-1.5">
            <Radio name="border" text="无线条" k="N" />
            <Radio name="border" text="实线" k="S" />
            <Radio name="border" text="渐变线" k="G" />
            <Radio name="border" text="自动" k="U" on />
          </div>
          <div className="mt-1 ml-9 border-t border-[#dadada]" />
          <ColorRow className="mt-2" bar="#e07a2e" />
        </div>
        <div className="mt-1.5 mr-[3px] ml-1 flex w-[15px] flex-col bg-[#dadada]">
          <ArrowBtn dir="up" />
          <div className="h-[390px] border border-[#b3b3b3] bg-white" />
          <span className="flex-1" />
          <ArrowBtn dir="down" />
        </div>
      </div>
    </aside>
  );
}

/* ---------- status bar ---------- */

function StatusBar() {
  return (
    <footer className="flex h-[21px] shrink-0 items-center bg-[#f1f1f1] text-xs text-[#444]">
      <span className="ml-[7px]">就绪</span>
      <span className="ml-[19px]">数字</span>
      <button aria-label="录制宏" className="ml-[17px]">
        <svg width="13" height="13" viewBox="0 0 13 13" fill="none" stroke="#777">
          <path d="M4 2.500h8.500v10H2.500V6" />
          <path d="M6 2.500h6.500" strokeWidth="2" />
          <path d="M4 6.500h7M4 8.500h7M4 10.500h7" strokeDasharray="2 1" />
          <circle cx="2.500" cy="2.500" r="2" fill="#666" stroke="none" />
        </svg>
      </button>
      <div className="flex-1" />
      <button aria-label="普通" className="flex h-full w-[37px] items-center justify-center bg-[#c9c9c9]">
        <svg width="13" height="13" fill="none" stroke="#666"><path d="M.5.500h12v12H.5zM.5 4.500h12M.5 8.500h12M4.500.500v12M8.500.500v12" /></svg>
      </button>
      <button aria-label="页面布局视图" className="flex w-[39px] justify-center">
        <svg width="14" height="13" fill="none" stroke="#666"><path d="M.5.500h13v12H.5zM3.500 2.500h7v8h-7zM5 4.500h4M5 6.500h4M5 8.500h4" /></svg>
      </button>
      <button aria-label="分页预览" className="flex w-[38px] justify-center">
        <svg width="14" height="13" fill="none" stroke="#666"><path d="M.5 0v12.500h13V0M.5.500h8v6h-4M4.500.500v6M8.500.500h5" /></svg>
      </button>
      <button aria-label="缩小" className="ml-[5px] flex w-3 justify-start">
        <svg width="6" height="2"><path d="M0 1h6" stroke="#555" strokeWidth="2" /></svg>
      </button>
      <input
        type="range"
        aria-label="缩放"
        defaultValue="50"
        className="h-3 w-[98px] appearance-none bg-[linear-gradient(#999,#999)] bg-[length:100%_1px] bg-center bg-no-repeat [&::-webkit-slider-thumb]:h-[11px] [&::-webkit-slider-thumb]:w-1 [&::-webkit-slider-thumb]:appearance-none [&::-webkit-slider-thumb]:bg-[#555]"
      />
      <button aria-label="放大" className="ml-1">
        <svg width="8" height="8"><path d="M4 0v8M0 4h8" stroke="#555" strokeWidth="2" /></svg>
      </button>
      <span className="mr-2 ml-4">100%</span>
    </footer>
  );
}

/* ---------- annotations drawn over the window ---------- */

const arrows = [
  [1214, 350, 1302, 334],
  [1226, 392, 1355, 370],
  [1215, 424, 1303, 403],
  [1227, 507, 1318, 482],
  [1225, 535, 1329, 519],
  [1193, 781, 1321, 770],
  [1033, 575, 908, 502],
];

function Annotations() {
  return (
    <svg width="1552" height="1038" className="absolute top-0 left-0" aria-hidden="true">
      <g style={{ filter: "drop-shadow(2px 3px 2px rgba(0,0,0,.45))" }}>
        {arrows.map(([x1, y1, x2, y2]) => {
          const len = Math.hypot(x2 - x1, y2 - y1);
          const deg = (Math.atan2(y2 - y1, x2 - x1) * 180) / Math.PI;
          return (
            <g key={x1 + "-" + y1} transform={`translate(${x1} ${y1}) rotate(${deg})`}>
              <path d={`M0 0H${len - 22}`} stroke="#dd1418" strokeWidth="3" strokeLinecap="round" />
              <path d={`M${len} 0l-27 -7l2 7l-2 7z`} fill="#fc0606" />
            </g>
          );
        })}
      </g>
      <path d="M1421 504.500v15l3.500-3 2.500 5.500 2-1-2.500-5.500h4.500z" fill="#fff" stroke="#333" />
    </svg>
  );
}

function Watermark() {
  return (
    <div className="pointer-events-none absolute right-0 bottom-0 flex items-end pr-2.5 pb-[7px]" aria-hidden="true">
      <svg width="82" height="60" viewBox="0 0 82 60" className="-mr-1.5 -mb-1">
        <path d="M0 40Q22 30 34 16L14 2h16l12 9Q50 0 60 0 50 8 46 16l16 12q-20 0-26-6Q22 36 0 40z" fill="#fff" opacity=".5" />
        <path d="M74 13Q42 8 34 30q-3 14 9 18-2-10 4-17Q56 17 74 13z" fill="#4b9ad4" opacity=".85" />
        <path d="M72 20Q50 22 45 36q-1 9 9 9 9-1 13-8l-12 1 3-4h14q-4 14-18 15-14 0-13-12Q46 24 72 20z" fill="#5fa8dc" opacity=".85" />
        <path d="M36 49q8 6 20 2 14-6 16-19 6 10-4 18-14 12-32-1z" fill="#8cc152" opacity=".8" />
      </svg>
      <div className="flex flex-col whitespace-nowrap">
        <span className="text-[21px] leading-6 font-bold text-[#6faedd]/80">极光下载站</span>
        <span className="font-['Liberation_Sans',sans-serif] text-[17px] leading-5 text-[#6cba7a]">www.xz7.com</span>
      </div>
    </div>
  );
}

export default function App() {
  return (
    <div className="relative flex h-screen min-h-[700px] flex-col overflow-hidden border-l-2 border-[#a9bbb1] bg-[#e6e6e6] font-['Open_Sans','Noto_Sans_CJK_SC',sans-serif]">
      <div className="flex min-h-0 flex-1 flex-col border-l border-[#4f7462]">
        <Header />
        <Ribbon />
        <QuickAccess />
        <FormulaBar />
        <div className="flex min-h-0 flex-1">
          <Worksheet />
          <Pane />
        </div>
        <StatusBar />
      </div>
      <div className="pointer-events-none absolute top-0 -left-0.5 h-full w-full">
        <Annotations />
      </div>
      <Watermark />
    </div>
  );
}
